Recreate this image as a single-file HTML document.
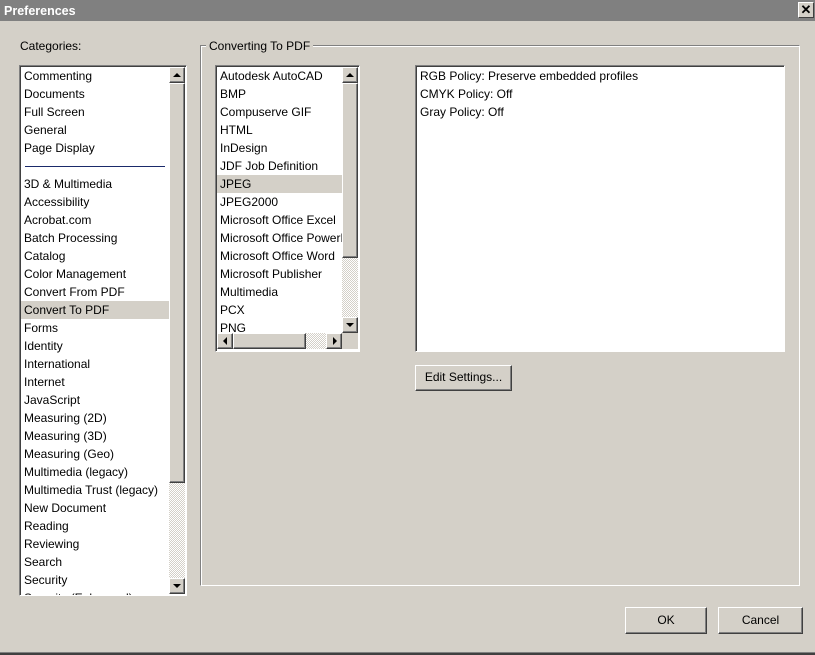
<!DOCTYPE html>
<html><head><style>
*{margin:0;padding:0;box-sizing:border-box}
body{width:815px;height:655px;background:#d4d0c8;font-family:"Liberation Sans",sans-serif;font-size:12px;color:#000;position:relative;overflow:hidden}
.abs{position:absolute}
.title{left:0;top:0;width:815px;height:21px;background:#808080;color:#fff;font-weight:bold;font-size:12.5px;padding:4px 4px}
.close{left:798px;top:2px;width:16px;height:16px;background:#d4d0c8;border:1px solid;border-color:#fff #404040 #404040 #fff;font-size:13px;font-weight:bold;text-align:center;line-height:13px}
.sunk{background:#fff;border:1px solid;border-color:#808080 #fff #fff #808080;box-shadow:inset 1px 1px 0 #404040}
.item{position:absolute;left:4px;height:18px;line-height:18px;white-space:nowrap}
.sel{background:#d4d0c8}
.sb{background:repeating-conic-gradient(#d4d0c8 0 25%,#fff 0 50%) 0 0/2px 2px}
.btn3{position:absolute;background:#d4d0c8;border:1px solid;border-color:#fff #404040 #404040 #fff;box-shadow:inset -1px -1px 0 #808080}
.tri{position:absolute;width:0;height:0}
.button{position:absolute;background:#d4d0c8;border:1px solid;border-color:#fff #404040 #404040 #fff;box-shadow:inset -1px -1px 0 #808080;text-align:center}
.clip{position:absolute;left:0;top:0;overflow:hidden}
</style></head><body>
<div class="abs title">Preferences</div>
<div class="abs close">✕</div>
<div class="abs" style="left:20px;top:39px">Categories:</div>

<div class="abs sunk" style="left:19px;top:65px;width:168px;height:531px;overflow:hidden">
 <div class="item" style="top:1px">Commenting</div>
 <div class="item" style="top:19px">Documents</div>
 <div class="item" style="top:37px">Full Screen</div>
 <div class="item" style="top:55px">General</div>
 <div class="item" style="top:73px">Page Display</div>
 <div class="abs" style="left:5px;top:100px;width:140px;height:1px;background:#1a2a6a"></div>
 <div class="item" style="top:109px">3D &amp; Multimedia</div>
 <div class="item" style="top:127px">Accessibility</div>
 <div class="item" style="top:145px">Acrobat.com</div>
 <div class="item" style="top:163px">Batch Processing</div>
 <div class="item" style="top:181px">Catalog</div>
 <div class="item" style="top:199px">Color Management</div>
 <div class="item" style="top:217px">Convert From PDF</div>
 <div class="item sel" style="top:235px;left:1px;width:148px;padding-left:3px">Convert To PDF</div>
 <div class="item" style="top:253px">Forms</div>
 <div class="item" style="top:271px">Identity</div>
 <div class="item" style="top:289px">International</div>
 <div class="item" style="top:307px">Internet</div>
 <div class="item" style="top:325px">JavaScript</div>
 <div class="item" style="top:343px">Measuring (2D)</div>
 <div class="item" style="top:361px">Measuring (3D)</div>
 <div class="item" style="top:379px">Measuring (Geo)</div>
 <div class="item" style="top:397px">Multimedia (legacy)</div>
 <div class="item" style="top:415px">Multimedia Trust (legacy)</div>
 <div class="item" style="top:433px">New Document</div>
 <div class="item" style="top:451px">Reading</div>
 <div class="item" style="top:469px">Reviewing</div>
 <div class="item" style="top:487px">Search</div>
 <div class="item" style="top:505px">Security</div>
 <div class="item" style="top:523px">Security (Enhanced)</div>
 <div class="abs sb" style="left:149px;top:1px;width:16px;height:527px"></div>
 <div class="btn3" style="left:149px;top:1px;width:16px;height:16px"><div class="tri" style="left:3px;top:5px;border:4px solid transparent;border-bottom:4px solid #000;border-top:0"></div></div>
 <div class="btn3" style="left:149px;top:17px;width:16px;height:400px"></div>
 <div class="btn3" style="left:149px;top:512px;width:16px;height:16px"><div class="tri" style="left:3px;top:5px;border:4px solid transparent;border-top:4px solid #000;border-bottom:0"></div></div>
</div>

<div class="abs" style="left:200px;top:45px;width:600px;height:541px;border:1px solid;border-color:#808080 #fff #fff #808080;box-shadow:inset 1px 1px 0 #fff,1px 1px 0 #808080 inset"></div>
<div class="abs" style="left:206px;top:39px;background:#d4d0c8;padding:0 3px">Converting To PDF</div>

<div class="abs sunk" style="left:215px;top:65px;width:145px;height:287px;overflow:hidden">
 <div class="clip" style="width:126px;height:267px">
 <div class="item" style="top:1px">Autodesk AutoCAD</div>
 <div class="item" style="top:19px">BMP</div>
 <div class="item" style="top:37px">Compuserve GIF</div>
 <div class="item" style="top:55px">HTML</div>
 <div class="item" style="top:73px">InDesign</div>
 <div class="item" style="top:91px">JDF Job Definition</div>
 <div class="item sel" style="top:109px;left:1px;width:125px;padding-left:3px">JPEG</div>
 <div class="item" style="top:127px">JPEG2000</div>
 <div class="item" style="top:145px">Microsoft Office Excel</div>
 <div class="item" style="top:163px">Microsoft Office PowerPoint</div>
 <div class="item" style="top:181px">Microsoft Office Word</div>
 <div class="item" style="top:199px">Microsoft Publisher</div>
 <div class="item" style="top:217px">Multimedia</div>
 <div class="item" style="top:235px">PCX</div>
 <div class="item" style="top:253px">PNG</div>
 </div>
 <div class="abs sb" style="left:126px;top:1px;width:16px;height:266px"></div>
 <div class="btn3" style="left:126px;top:1px;width:16px;height:16px"><div class="tri" style="left:3px;top:5px;border:4px solid transparent;border-bottom:4px solid #000;border-top:0"></div></div>
 <div class="btn3" style="left:126px;top:17px;width:16px;height:175px"></div>
 <div class="btn3" style="left:126px;top:251px;width:16px;height:16px"><div class="tri" style="left:3px;top:5px;border:4px solid transparent;border-top:4px solid #000;border-bottom:0"></div></div>
 <div class="abs sb" style="left:1px;top:267px;width:125px;height:16px"></div>
 <div class="btn3" style="left:1px;top:267px;width:16px;height:16px"><div class="tri" style="left:5px;top:3px;border:4px solid transparent;border-right:4px solid #000;border-left:0"></div></div>
 <div class="btn3" style="left:17px;top:267px;width:73px;height:16px"></div>
 <div class="btn3" style="left:110px;top:267px;width:16px;height:16px"><div class="tri" style="left:6px;top:3px;border:4px solid transparent;border-left:4px solid #000;border-right:0"></div></div>
 <div class="abs" style="left:126px;top:267px;width:16px;height:16px;background:#d4d0c8"></div>
</div>

<div class="abs sunk" style="left:415px;top:65px;width:370px;height:287px">
 <div class="item" style="top:1px">RGB Policy: Preserve embedded profiles</div>
 <div class="item" style="top:19px">CMYK Policy: Off</div>
 <div class="item" style="top:37px">Gray Policy: Off</div>
</div>

<div class="button" style="left:415px;top:365px;width:97px;height:26px;line-height:23px">Edit Settings...</div>
<div class="button" style="left:625px;top:607px;width:82px;height:27px;line-height:25px">OK</div>
<div class="button" style="left:718px;top:607px;width:85px;height:27px;line-height:25px">Cancel</div>
<div class="abs" style="left:0;top:652px;width:815px;height:3px;background:#404040;border-top:1px solid #808080"></div>
</body></html>
